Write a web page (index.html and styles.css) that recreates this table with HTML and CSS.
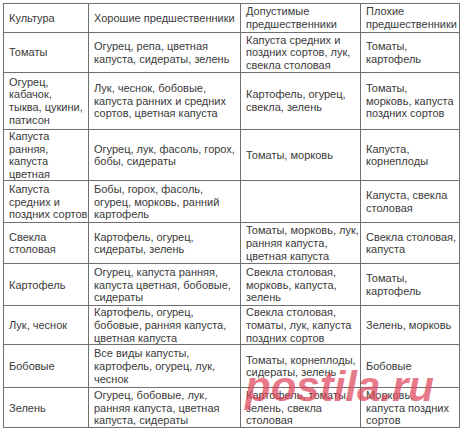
FILE: index.html
```html
<!DOCTYPE html>
<html lang="ru">
<head>
<meta charset="utf-8">
<title>Предшественники</title>
<link rel="stylesheet" href="styles.css">
</head>
<body>
<div class="wrap">
<table class="crops">
<colgroup><col class="c1"><col class="c2"><col class="c3"><col class="c4"></colgroup>
<tr class="h0"><td>Культура</td><td>Хорошие предшественники</td><td>Допустимые<br>предшественники</td><td>Плохие<br>предшественники</td></tr>
<tr class="h1"><td>Томаты</td><td>Огурец, репа, цветная<br>капуста, сидераты, зелень</td><td>Капуста средних и<br>поздних сортов, лук,<br>свекла столовая</td><td>Томаты,<br>картофель</td></tr>
<tr class="h2"><td>Огурец,<br>кабачок,<br>тыква, цукини,<br>патисон</td><td>Лук, чеснок, бобовые,<br>капуста ранних и средних<br>сортов, цветная капуста</td><td>Картофель, огурец,<br>свекла, зелень</td><td>Томаты,<br>морковь, капуста<br>поздних сортов</td></tr>
<tr class="h3"><td>Капуста<br>ранняя,<br>капуста<br>цветная</td><td>Огурец, лук, фасоль, горох,<br>бобы, сидераты</td><td>Томаты, морковь</td><td>Капуста,<br>корнеплоды</td></tr>
<tr class="h4"><td>Капуста<br>средних и<br>поздних сортов</td><td>Бобы, горох, фасоль,<br>огурец, морковь, ранний<br>картофель</td><td></td><td>Капуста, свекла<br>столовая</td></tr>
<tr class="h5"><td>Свекла<br>столовая</td><td>Картофель, огурец,<br>сидераты, зелень</td><td>Томаты, морковь, лук,<br>ранняя капуста,<br>цветная капуста</td><td>Свекла столовая,<br>капуста</td></tr>
<tr class="h6"><td>Картофель</td><td>Огурец, капуста ранняя,<br>капуста цветная, бобовые,<br>сидераты</td><td>Свекла столовая,<br>морковь, капуста,<br>зелень</td><td>Томаты,<br>картофель</td></tr>
<tr class="h7"><td>Лук, чеснок</td><td>Картофель, огурец,<br>бобовые, ранняя капуста,<br>цветная капуста</td><td>Свекла столовая,<br>томаты, лук, капуста<br>поздних сортов</td><td>Зелень, морковь</td></tr>
<tr class="h8"><td>Бобовые</td><td>Все виды капусты,<br>картофель, огурец, лук,<br>чеснок</td><td>Томаты, корнеплоды,<br>сидераты, зелень</td><td>Бобовые</td></tr>
<tr class="h9"><td>Зелень</td><td>Огурец, бобовые, лук,<br>ранняя капуста, цветная<br>капуста, сидераты</td><td>Картофель, томаты,<br>зелень, свекла<br>столовая</td><td>Морковь,<br>капуста поздних<br>сортов</td></tr>
</table>
<div class="mark">postila.ru</div>
</div>
</body>
</html>
```
FILE: styles.css
```css
html, body {
  margin: 0;
  padding: 0;
  background: #fff;
}
body {
  padding: 3px 0 0 3px;
}
.wrap {
  position: relative;
  width: 456px;
}
.crops {
  border-collapse: collapse;
  table-layout: fixed;
  width: 456px;
  font-family: "Liberation Sans", Arial, sans-serif;
  font-size: 11px;
  line-height: 12.6px;
  color: #3a3a3a;
}
.crops td {
  border: 1px solid #707070;
  padding: 0 4px 0 5px;
  vertical-align: middle;
  white-space: nowrap;
  overflow: hidden;
}
.c1 { width: 85px; }
.c2 { width: 152px; }
.c3 { width: 120px; }
.c4 { width: 99px; }
.h0 { height: 29px; }
.h1 { height: 40px; }
.h2 { height: 57px; }
.h3 { height: 51px; }
.h4 { height: 42px; }
.h5 { height: 41px; }
.h6 { height: 42px; }
.h7 { height: 39px; }
.h8 { height: 43px; }
.h9 { height: 40px; }
.mark {
  position: absolute;
  left: 242px;
  top: 363px;
  font-family: "Liberation Sans", Arial, sans-serif;
  font-weight: bold;
  font-style: italic;
  font-size: 42px;
  line-height: 42px;
  color: rgba(222, 70, 90, 0.72);
  white-space: nowrap;
}
```
